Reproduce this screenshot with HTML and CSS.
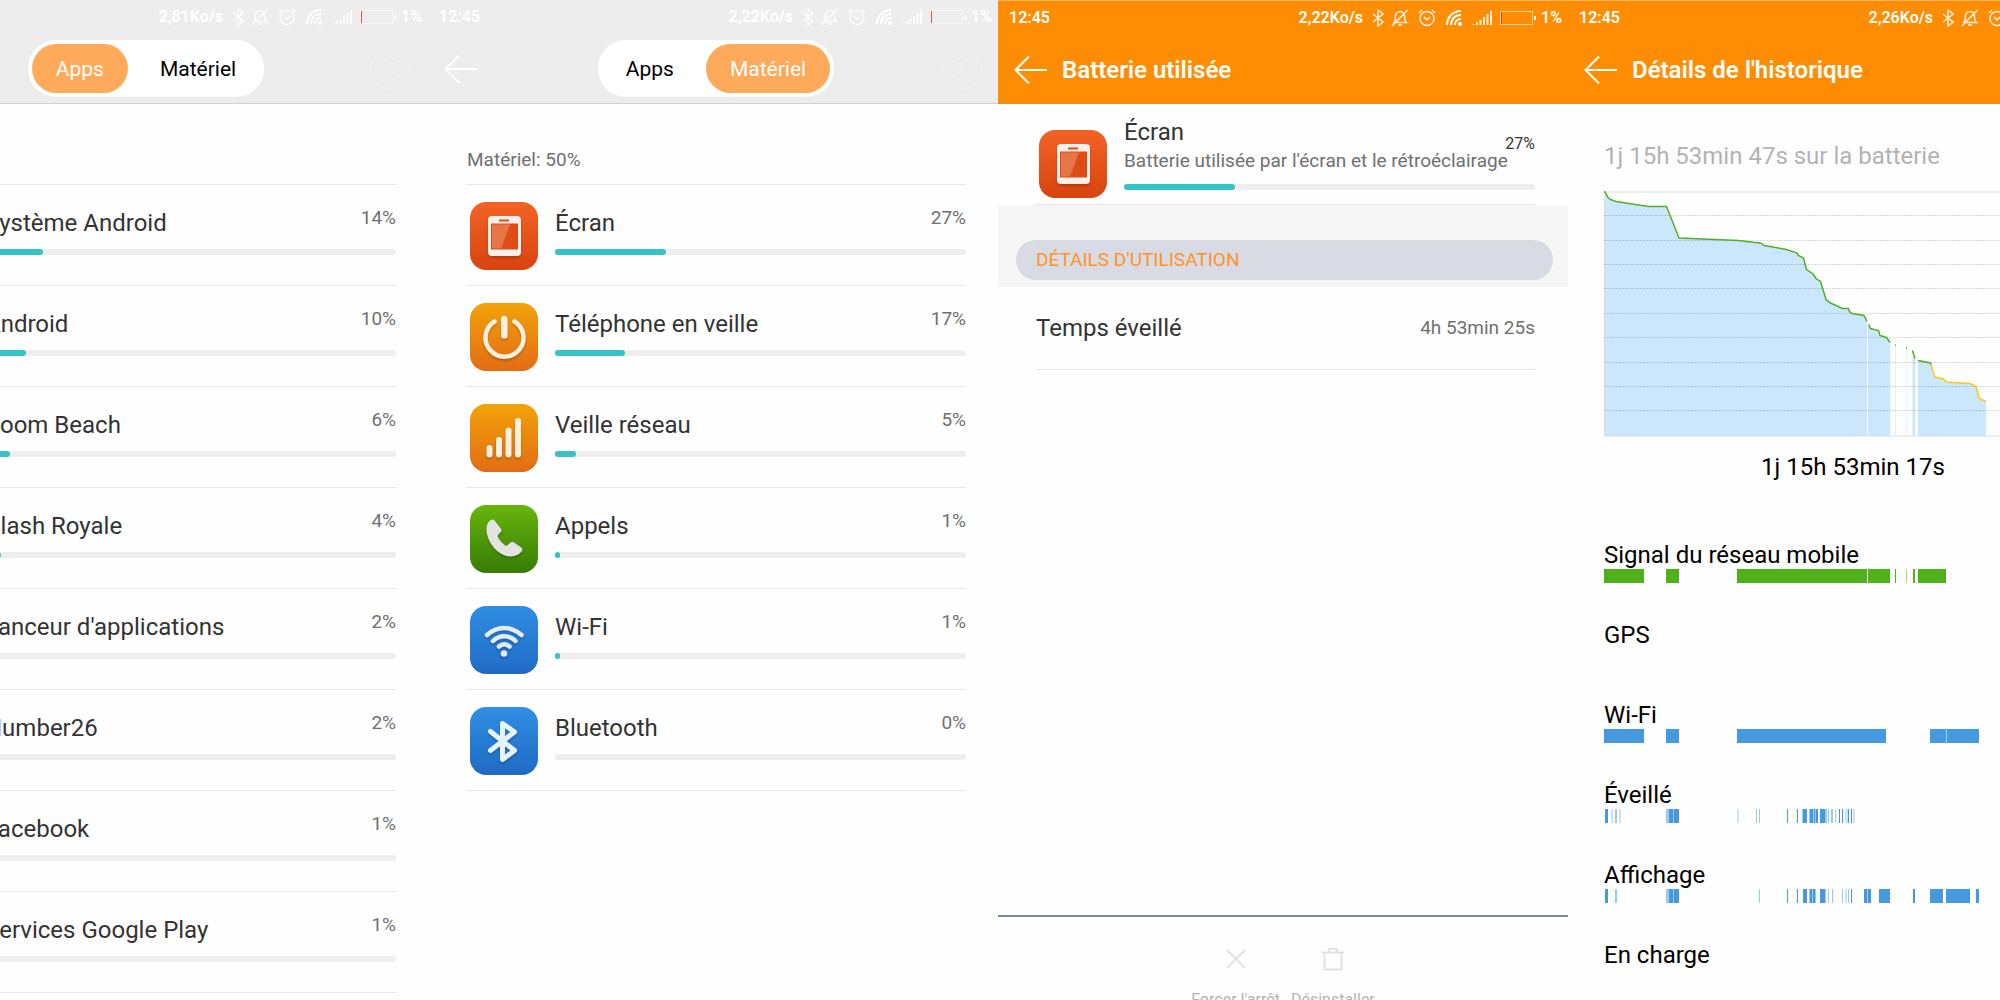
FILE: index.html
```html
<!DOCTYPE html>
<html lang="fr">
<head>
    <meta charset="UTF-8">
    <meta name="viewport" content="width=device-width, initial-scale=1.0">
    <title>Batterie</title>
    <link rel="stylesheet" href="styles.css">
</head>
<body>

    <!-- shared icons -->
    <svg class="sprite" width="0" height="0" aria-hidden="true">
        <symbol id="bluetooth" viewBox="0 0 12 18"><path d="M1 5l10 8-5 4V1l5 4-10 8"/></symbol>
        <symbol id="bell" viewBox="0 0 18 18"><path d="M3 13.500c1.500-1.500 1.500-3 1.500-6C4.500 4.500 6.500 2.500 9 2.500s4.500 2 4.500 5c0 3 0 4.500 2 6zM7 16h4M16.500 1L1 17"/></symbol>
        <symbol id="alarm" viewBox="0 0 18 18"><circle cx="9" cy="9.500" r="7"/><path d="M6 8l3 3 3-3M1 4l3-3M17 4l-3-3"/></symbol>
        <symbol id="wifi" viewBox="0 0 18 18"><path d="M2 16C2 8 8 2 16 2M6 16c0-6 4-10 10-10M10 16c0-3.500 2.500-6 6-6"/><circle cx="15" cy="15" r="1"/></symbol>
        <symbol id="signal" viewBox="0 0 20 16"><path d="M1.500 14v1M5 12v3M8.500 10v5M12 7v8M15.500 4v11M19 1v14"/></symbol>
        <symbol id="battery" viewBox="0 0 36 16"><path class="outline" d="M.5 1.500h32v13H.5z"/><path class="low" d="M1.500 2v12"/><path class="tip" d="M35 6v4"/></symbol>
        <symbol id="back" viewBox="0 0 34 30"><path d="M15 1.500L1.500 15 15 28.500M1.500 15H33"/></symbol>
        <symbol id="clock" viewBox="0 0 42 42"><circle cx="21" cy="21" r="20"/><circle cx="21" cy="21" r="11"/><path d="M21 14v7h4"/></symbol>
        <symbol id="screen" viewBox="0 0 68 68">
            <path fill="#fdf0ea" d="M22 14h25a4 4 0 0 1 4 4v32a4 4 0 0 1-4 4H22a4 4 0 0 1-4-4V18a4 4 0 0 1 4-4z"/>
            <path fill="#de4d17" d="M29 17.500h10v2H29zM21 21.500h27v26H21z"/>
            <path fill="#e87548" d="M22 22.500h18l-9 24h-9z"/>
        </symbol>
    </svg>

    <main class="screens">

        <section class="screen">
            <header class="top top-light">
                <div class="status">
                    <span>12:45</span>
                    <div class="status-icons">
                        <span>2,81Ko/s</span>
                        <svg class="s-bluetooth"><use href="#bluetooth"/></svg>
                        <svg class="s-icon"><use href="#bell"/></svg>
                        <svg class="s-icon"><use href="#alarm"/></svg>
                        <svg class="s-icon s-wifi"><use href="#wifi"/></svg>
                        <svg class="s-signal"><use href="#signal"/></svg>
                        <svg class="s-battery"><use href="#battery"/></svg>
                        <span>1%</span>
                    </div>
                </div>
                <div class="titlebar titlebar-tabs">
                    <button class="back" aria-label="Retour"><svg><use href="#back"/></svg></button>
                    <div class="tabs">
                        <button class="tab selected">Apps</button>
                        <button class="tab">Matériel</button>
                    </div>
                    <button class="history" aria-label="Historique"><svg><use href="#clock"/></svg></button>
                </div>
            </header>
            <h2 class="total">Apps: 50%</h2>
            <ul class="usage">
                <li>
                    <span class="app-icon green"></span>
                    <div class="info">
                        <div class="line"><span class="name">Système Android</span><span class="percent">14%</span></div>
                        <div class="bar"><span style="width: 14%"></span></div>
                    </div>
                </li>
                <li>
                    <span class="app-icon green"></span>
                    <div class="info">
                        <div class="line"><span class="name">Android</span><span class="percent">10%</span></div>
                        <div class="bar"><span style="width: 10%"></span></div>
                    </div>
                </li>
                <li>
                    <span class="app-icon blue"></span>
                    <div class="info">
                        <div class="line"><span class="name">Boom Beach</span><span class="percent">6%</span></div>
                        <div class="bar"><span style="width: 6%"></span></div>
                    </div>
                </li>
                <li>
                    <span class="app-icon blue"></span>
                    <div class="info">
                        <div class="line"><span class="name">Clash Royale</span><span class="percent">4%</span></div>
                        <div class="bar"><span style="width: 4%"></span></div>
                    </div>
                </li>
                <li>
                    <span class="app-icon orange"></span>
                    <div class="info">
                        <div class="line"><span class="name">Lanceur d'applications</span><span class="percent">2%</span></div>
                        <div class="bar"><span style="width: 2%"></span></div>
                    </div>
                </li>
                <li>
                    <span class="app-icon blue"></span>
                    <div class="info">
                        <div class="line"><span class="name">Number26</span><span class="percent">2%</span></div>
                        <div class="bar"><span style="width: 2%"></span></div>
                    </div>
                </li>
                <li>
                    <span class="app-icon blue"></span>
                    <div class="info">
                        <div class="line"><span class="name">Facebook</span><span class="percent">1%</span></div>
                        <div class="bar"><span style="width: 1%"></span></div>
                    </div>
                </li>
                <li>
                    <span class="app-icon green"></span>
                    <div class="info">
                        <div class="line"><span class="name">Services Google Play</span><span class="percent">1%</span></div>
                        <div class="bar"><span style="width: 1%"></span></div>
                    </div>
                </li>
            </ul>
        </section>

        <section class="screen">
            <header class="top top-light">
                <div class="status">
                    <span>12:45</span>
                    <div class="status-icons">
                        <span>2,22Ko/s</span>
                        <svg class="s-bluetooth"><use href="#bluetooth"/></svg>
                        <svg class="s-icon"><use href="#bell"/></svg>
                        <svg class="s-icon"><use href="#alarm"/></svg>
                        <svg class="s-icon s-wifi"><use href="#wifi"/></svg>
                        <svg class="s-signal"><use href="#signal"/></svg>
                        <svg class="s-battery"><use href="#battery"/></svg>
                        <span>1%</span>
                    </div>
                </div>
                <div class="titlebar titlebar-tabs">
                    <button class="back" aria-label="Retour"><svg><use href="#back"/></svg></button>
                    <div class="tabs">
                        <button class="tab">Apps</button>
                        <button class="tab selected">Matériel</button>
                    </div>
                    <button class="history" aria-label="Historique"><svg><use href="#clock"/></svg></button>
                </div>
            </header>
            <h2 class="total">Matériel: 50%</h2>
            <ul class="usage">
                <li>
                    <span class="app-icon red"><svg><use href="#screen"/></svg></span>
                    <div class="info">
                        <div class="line"><span class="name">Écran</span><span class="percent">27%</span></div>
                        <div class="bar"><span style="width: 27%"></span></div>
                    </div>
                </li>
                <li>
                    <span class="app-icon orange">
                        <svg viewBox="0 0 68 68" fill="none" stroke="#fdf0de" stroke-linecap="round">
                            <path stroke-width="4.500" d="M24.500 18.500a19 19 0 1 0 20 0"/>
                            <path stroke-width="6.500" d="M34.300 16v16.500"/>
                        </svg>
                    </span>
                    <div class="info">
                        <div class="line"><span class="name">Téléphone en veille</span><span class="percent">17%</span></div>
                        <div class="bar"><span style="width: 17%"></span></div>
                    </div>
                </li>
                <li>
                    <span class="app-icon orange">
                        <svg viewBox="0 0 68 68" fill="none" stroke="#fdf0de" stroke-width="6" stroke-linecap="round">
                            <path d="M19.500 44v6.500M29 36v14.500M38.500 26.500v24M48 17v33.500"/>
                        </svg>
                    </span>
                    <div class="info">
                        <div class="line"><span class="name">Veille réseau</span><span class="percent">5%</span></div>
                        <div class="bar"><span style="width: 5%"></span></div>
                    </div>
                </li>
                <li>
                    <span class="app-icon green">
                        <svg viewBox="0 0 68 68" fill="#e2e4e2">
                            <path d="M20.500 15.300c1.500-1.200 3-.8 4 .3l6.300 7.900c1 1.300.8 2.400-.2 3.600l-2.400 2.600c-.7.900-.7 1.800-.1 2.800 1.800 3 4 5.500 6.800 7.700 1 .8 2 .7 2.900-.1l2.700-2.500c1.100-1 2.200-1.100 3.500-.2l7.300 5c1.400 1 1.500 2.500.4 3.900-2.500 3.200-6.500 5.300-11.200 5.200C27.500 51 16.200 36.500 16.500 23.500c.1-3.800 1.500-6.300 4-8.200z"/>
                        </svg>
                    </span>
                    <div class="info">
                        <div class="line"><span class="name">Appels</span><span class="percent">1%</span></div>
                        <div class="bar"><span style="width: 1%"></span></div>
                    </div>
                </li>
                <li>
                    <span class="app-icon blue">
                        <svg viewBox="0 0 68 68" fill="none" stroke="#e6ebef" stroke-width="4.500" stroke-linecap="round">
                            <path d="M17 29c10-9.500 24-9.500 34.500 0M23 35c6.500-6.500 16-6.500 22.500 0M29 40.500c3.500-3 7-3 10.500 0"/>
                            <circle cx="34" cy="47.500" r="3.200" fill="#dfe9f2" stroke="none"/>
                        </svg>
                    </span>
                    <div class="info">
                        <div class="line"><span class="name">Wi-Fi</span><span class="percent">1%</span></div>
                        <div class="bar"><span style="width: 1%"></span></div>
                    </div>
                </li>
                <li>
                    <span class="app-icon blue">
                        <svg viewBox="0 0 68 68" fill="none" stroke="#e6f3fd" stroke-width="5" stroke-linecap="round" stroke-linejoin="round">
                            <path d="M20.500 24.500L44.500 43.500 32.500 52.500V16.500L44.500 25 20.500 43.500"/>
                        </svg>
                    </span>
                    <div class="info">
                        <div class="line"><span class="name">Bluetooth</span><span class="percent">0%</span></div>
                        <div class="bar"></div>
                    </div>
                </li>
            </ul>
        </section>

        <section class="screen">
            <header class="top">
                <div class="status">
                    <span>12:45</span>
                    <div class="status-icons">
                        <span>2,22Ko/s</span>
                        <svg class="s-bluetooth"><use href="#bluetooth"/></svg>
                        <svg class="s-icon"><use href="#bell"/></svg>
                        <svg class="s-icon"><use href="#alarm"/></svg>
                        <svg class="s-icon s-wifi"><use href="#wifi"/></svg>
                        <svg class="s-signal"><use href="#signal"/></svg>
                        <svg class="s-battery"><use href="#battery"/></svg>
                        <span>1%</span>
                    </div>
                </div>
                <div class="titlebar">
                    <button class="back" aria-label="Retour"><svg><use href="#back"/></svg></button>
                    <h1>Batterie utilisée</h1>
                </div>
            </header>
            <div class="summary">
                <span class="app-icon red"><svg><use href="#screen"/></svg></span>
                <div class="summary-info">
                    <div class="name">Écran</div>
                    <div class="description">Batterie utilisée par l'écran et le rétroéclairage</div>
                    <div class="bar"><span style="width: 27%"></span></div>
                </div>
                <span class="summary-percent">27%</span>
            </div>
            <div class="section-title">
                <h2>DÉTAILS D'UTILISATION</h2>
            </div>
            <div class="detail">
                <span class="name">Temps éveillé</span>
                <span class="percent">4h 53min 25s</span>
            </div>
            <footer class="actions">
                <button class="action">
                    <svg viewBox="0 0 24 24"><path d="M3 3l18 18M21 3L3 21"/></svg>
                    Forcer l'arrêt
                </button>
                <button class="action">
                    <svg viewBox="0 0 24 24"><path d="M1 5.500h22M3.500 6v16.500h17V6M8 5V2h8v3"/></svg>
                    Désinstaller
                </button>
            </footer>
        </section>

        <section class="screen">
            <header class="top">
                <div class="status">
                    <span>12:45</span>
                    <div class="status-icons">
                        <span>2,26Ko/s</span>
                        <svg class="s-bluetooth"><use href="#bluetooth"/></svg>
                        <svg class="s-icon"><use href="#bell"/></svg>
                        <svg class="s-icon"><use href="#alarm"/></svg>
                        <svg class="s-icon s-wifi"><use href="#wifi"/></svg>
                        <svg class="s-signal"><use href="#signal"/></svg>
                        <svg class="s-battery"><use href="#battery"/></svg>
                        <span>1%</span>
                    </div>
                </div>
                <div class="titlebar">
                    <button class="back" aria-label="Retour"><svg><use href="#back"/></svg></button>
                    <h1>Détails de l'historique</h1>
                </div>
            </header>
            <div class="history-details">
                <p class="since">1j 15h 53min 47s sur la batterie</p>
                <svg class="chart" viewBox="0 0 498 246">
                    <path class="area" d="M0 245V0l2 2.500 2 4 2.500 2 5.500 2 32.500 5h18L75 47l59.500 2.500 16.500 2 5.500.5 3.500 2.500 22.500 4L193 62l1.500 2.500 5 2.500 3 11.500L209 83l3 4.500 4.500 3 5.500 18 4.500 3.500 12 5.500h6l1 3 2.500 2 12 2 3 6V245z"/>
                    <path class="area" d="M264 245V133l2.500 4.500 8 2 1.500 5 6.500 2 3.500 5V245zM308.500 245v-85.500l2.500 7.500v78zM314 245v-76l12.500 2.500 4.500 14.500 8.500 2 3 3 23.500 1.500 6 3 3 11 2 2 5 1.500v35z"/>
                    <path class="area-thin" d="M291.500 155v90M302.500 158v87"/>
                    <path class="frame" d="M0 1h498M0 245h498M0 1v244"/>
                    <path class="grid" d="M0 24.500h498M0 49.500h498M0 73.500h498M0 97.500h498M0 122.500h498M0 146.500h498M0 171.500h498M0 195.500h498M0 219.500h498"/>
                    <path class="level" d="M0 0l2 2.500 2 4 2.500 2 5.500 2 32.500 5h18L75 47l59.500 2.500 16.500 2 5.500.5 3.500 2.500 22.500 4L193 62l1.500 2.500 5 2.500 3 11.500L209 83l3 4.500 4.500 3 5.500 18 4.500 3.500 12 5.500h6l1 3 2.500 2 12 2 3 6"/>
                    <path class="level" d="M264.500 133.500l2 4 8 2 1.500 5 6.500 2 3.500 5M308.500 159.500l2.500 8M314 169.500l12.500 2.500.5 2M291 154h1M302 157h1"/>
                    <path class="level warning" d="M327 173.500L331 186l8.500 2 3 3 23.500 1.500 6 3 3 11 2 2 5 1.500"/>
                </svg>
                <p class="duration">1j 15h 53min 17s</p>
                <div class="timeline">
                    <span>Signal du réseau mobile</span>
                    <svg viewBox="0 0 498 14" preserveAspectRatio="none">
                        <path fill="#4fb01a" d="M0 0h40v14H0zM62 0h13v14H62zM133 0h130v14H133zM264 0h22v14h-22zM291 0h1v14h-1zM309 0h2v14h-2zM314 0h28v14h-28z"/>
                        <path fill="#c4c4b8" d="M302 0h1v14h-1z"/>
                    </svg>
                </div>
                <div class="timeline">
                    <span>GPS</span>
                </div>
                <div class="timeline">
                    <span>Wi-Fi</span>
                    <svg viewBox="0 0 498 14" preserveAspectRatio="none">
                        <path fill="#4699df" d="M0 0h40v14H0zM62 0h13v14H62zM133 0h149v14H133zM326 0h16v14h-16zM343 0h32v14h-32z"/>
                        <path fill="#9ccaef" d="M342 0h1v14h-1z"/>
                    </svg>
                </div>
                <div class="timeline">
                    <span>Éveillé</span>
                    <svg viewBox="0 0 498 14" preserveAspectRatio="none">
                        <path fill="#4699df" d="M1 0h3v14H1zM65 0h4v14h-4zM70 0h5v14h-5zM183 0h1v14h-1zM193 0h1v14h-1zM199 0h4v14h-4zM206 0h3v14h-3zM210 0h1v14h-1zM212 0h2v14h-2zM216 0h5v14h-5zM235 0h1v14h-1zM238 0h1v14h-1zM244 0h1v14h-1zM247 0h1v14h-1z"/>
                        <path fill="#9ccaef" d="M11 0h2v14h-2zM62 0h3v14h-3zM69 0h1v14h-1zM152 0h1v14h-1zM155 0h1v14h-1zM198 0h1v14h-1zM205 0h1v14h-1zM209 0h1v14h-1zM211 0h1v14h-1zM221 0h2v14h-2zM224 0h1v14h-1zM227 0h2v14h-2zM231 0h1v14h-1z"/>
                        <path fill="#cde4f7" d="M7 0h2v14H7zM15 0h2v14h-2zM133 0h2v14h-2zM241 0h3v14h-3zM249 0h2v14h-2z"/>
                    </svg>
                </div>
                <div class="timeline">
                    <span>Affichage</span>
                    <svg viewBox="0 0 498 14" preserveAspectRatio="none">
                        <path fill="#4699df" d="M1 0h3v14H1zM65 0h4v14h-4zM70 0h5v14h-5zM183 0h1v14h-1zM193 0h1v14h-1zM199 0h4v14h-4zM206 0h2v14h-2zM209 0h2v14h-2zM216 0h5v14h-5zM247 0h1v14h-1zM260 0h3v14h-3zM264 0h3v14h-3zM275 0h11v14h-11zM309 0h2v14h-2zM326 0h13v14h-13zM342 0h24v14h-24zM372 0h3v14h-3z"/>
                        <path fill="#9ccaef" d="M11 0h2v14h-2zM62 0h3v14h-3zM69 0h1v14h-1zM155 0h1v14h-1zM205 0h1v14h-1zM208 0h1v14h-1zM211 0h1v14h-1zM221 0h1v14h-1zM224 0h1v14h-1zM228 0h1v14h-1zM238 0h1v14h-1zM244 0h1v14h-1zM263 0h1v14h-1z"/>
                        <path fill="#cde4f7" d="M241 0h2v14h-2z"/>
                    </svg>
                </div>
                <div class="timeline">
                    <span>En charge</span>
                </div>
            </div>
        </section>

    </main>
</body>
</html>
```
FILE: styles.css
```css
* {
    box-sizing: border-box;
}

body {
    margin: 0;
    font-family: Roboto, "Liberation Sans", sans-serif;
    background-color: #fefefe;
    color: #333;
}

h1, h2, p, ul {
    margin: 0;
    padding: 0;
}

button {
    border: 0;
    padding: 0;
    background: none;
    font-family: inherit;
    color: inherit;
}

svg {
    display: block;
}

.sprite {
    position: absolute;
}

/* four phone screens side by side, cut off at both ends */
.screens {
    display: flex;
    height: 100vh;
    overflow: hidden;
}

.screen {
    flex: 0 0 28.5%;
    display: flex;
    flex-direction: column;
    align-self: flex-start;
    aspect-ratio: 9 / 16;
}

.screen:first-child {
    margin-left: -7.1%;
}

.screen:last-child {
    flex-grow: 1;
}

/* header */
.top {
    height: 104px;
    background-color: #ff8d03;
    border-top: 1px solid #ffb65c;
    color: #fff;
}

.top-light {
    background-color: #ededed;
    border-top: 0;
    border-bottom: 1px solid #d2d2d2;
}

.status {
    display: flex;
    justify-content: space-between;
    align-items: center;
    height: 33px;
    padding: 0 6px 0 11px;
    font-size: 16px;
    font-weight: 600;
}

.status-icons {
    display: flex;
    align-items: center;
    gap: 9px;
}

.status svg {
    fill: none;
    stroke: #fff;
    stroke-width: 1.5;
    opacity: 0.85;
}

.s-bluetooth {
    width: 12px;
    height: 18px;
    margin-right: -2px;
}

.s-icon {
    width: 18px;
    height: 18px;
}

.status .s-wifi {
    stroke-width: 2;
    opacity: 1;
}

.status .s-signal {
    width: 20px;
    height: 16px;
    stroke-width: 2;
}

.status .s-battery {
    width: 36px;
    height: 16px;
    margin: 0 -4px 0 -1px;
    stroke-width: 1;
}

.outline {
    opacity: 0.7;
}

.low {
    stroke: #f0323c;
}

.tip {
    stroke-width: 2;
}

.titlebar {
    display: flex;
    align-items: center;
    height: 71px;
    padding: 0 16px;
}

.titlebar-tabs {
    justify-content: space-between;
}

.titlebar h1 {
    font-size: 24px;
    line-height: 28px;
    font-weight: 600;
}

.back {
    width: 48px;
}

.back svg {
    width: 34px;
    height: 30px;
    fill: none;
    stroke: #fff;
    stroke-width: 2;
}

.history svg {
    width: 42px;
    height: 42px;
    fill: none;
    stroke: #f2f2f2;
    stroke-width: 1;
}

.tabs {
    display: flex;
    gap: 8px;
    padding: 4px;
    border-radius: 28px;
    background-color: #fff;
}

.tab {
    height: 49px;
    padding: 0 24px;
    border-radius: 25px;
    font-size: 21px;
    color: #000;
}

.tab.selected {
    background-color: #ffaa5a;
    color: #fff;
}

/* usage lists */
.total {
    padding: 45px 39px 13px;
    font-size: 19px;
    line-height: 22px;
    font-weight: 400;
    color: #707070;
}

.usage {
    margin: 0 32px 0 38px;
    border-top: 1px solid #e6e6e6;
    list-style: none;
}

.usage li {
    display: flex;
    gap: 17px;
    height: 101px;
    padding: 17px 0 0 4px;
    border-bottom: 1px solid #e6e6e6;
}

.app-icon {
    flex: none;
    width: 68px;
    height: 68px;
    border-radius: 16px;
}

.app-icon svg {
    width: 68px;
    height: 68px;
    filter: drop-shadow(0 2px 1px rgba(0, 0, 0, 0.2));
}

.red {
    background: linear-gradient(#f26325, #d84310);
}

.orange {
    background: linear-gradient(#f2a20a, #e36c14);
}

.green {
    background: linear-gradient(#68b40c, #367c07);
}

.blue {
    background: linear-gradient(#2f8fe3, #206ac4);
}

.info {
    flex: 1;
    padding-top: 5px;
}

.line {
    display: flex;
    justify-content: space-between;
    align-items: flex-start;
}

.name {
    font-size: 24px;
    line-height: 28px;
}

.line .name {
    margin-top: 2px;
}

.percent {
    font-size: 19px;
    line-height: 22px;
    color: #707070;
}

.bar {
    height: 6px;
    margin-top: 12px;
    border-radius: 3px;
    background-color: #eee;
}

.bar span {
    display: block;
    min-width: 5px;
    height: 100%;
    border-radius: 3px;
    background-color: #35c3c3;
}

/* battery use of one item */
.summary {
    position: relative;
    display: flex;
    align-items: flex-end;
    gap: 17px;
    margin: 0 33px 0 37px;
    padding: 14px 0 6px 4px;
    border-bottom: 1px solid #e6e6e6;
}

.summary-info {
    flex: 1;
    padding-bottom: 8px;
}

.description {
    margin-top: 4px;
    font-size: 19px;
    line-height: 22px;
    white-space: nowrap;
    color: #707070;
}

.summary-percent {
    position: absolute;
    top: 31px;
    right: 0;
    font-size: 16px;
    line-height: 18px;
}

.section-title {
    padding: 35px 15px 7px 18px;
    background-color: #f6f6f6;
}

.section-title h2 {
    padding: 0 20px;
    border-radius: 20px;
    background-color: #d8dbe4;
    font-size: 19px;
    line-height: 40px;
    font-weight: 400;
    color: #ff9426;
}

.detail {
    display: flex;
    justify-content: space-between;
    align-items: center;
    height: 83px;
    margin: 0 33px 0 38px;
    border-bottom: 1px solid #e6e6e6;
}

.actions {
    display: flex;
    justify-content: center;
    gap: 11px;
    height: 98px;
    margin-top: auto;
    border-top: 2px solid #76889a;
}

.action {
    display: flex;
    flex-direction: column;
    align-items: center;
    gap: 20px;
    padding-top: 30px;
    font-size: 16px;
    line-height: 18px;
    color: #b4b4b4;
}

.action svg {
    width: 24px;
    height: 24px;
    fill: none;
    stroke: #e2e2e2;
    stroke-width: 2;
}

/* history */
.history-details {
    padding: 38px 36px 0;
    font-size: 24px;
    line-height: 28px;
    color: #000;
}

.since {
    margin-bottom: 21px;
    color: #b3b3b3;
}

.chart {
    width: 100%;
    fill: none;
}

.area {
    fill: #cbe7fe;
}

.area-thin {
    stroke: #e2f1fe;
}

.frame {
    stroke: #dcdcdc;
}

.grid {
    stroke: rgba(0, 0, 0, 0.15);
    stroke-dasharray: 2 1;
}

.level {
    stroke: #53b020;
    stroke-width: 1.5;
}

.warning {
    stroke: #fbcb12;
}

.duration {
    margin: 16px 0 60px;
    text-align: center;
}

.timeline {
    height: 80px;
}

.timeline svg {
    width: 100%;
    height: 14px;
}

.timeline span {
    display: block;
}
```
